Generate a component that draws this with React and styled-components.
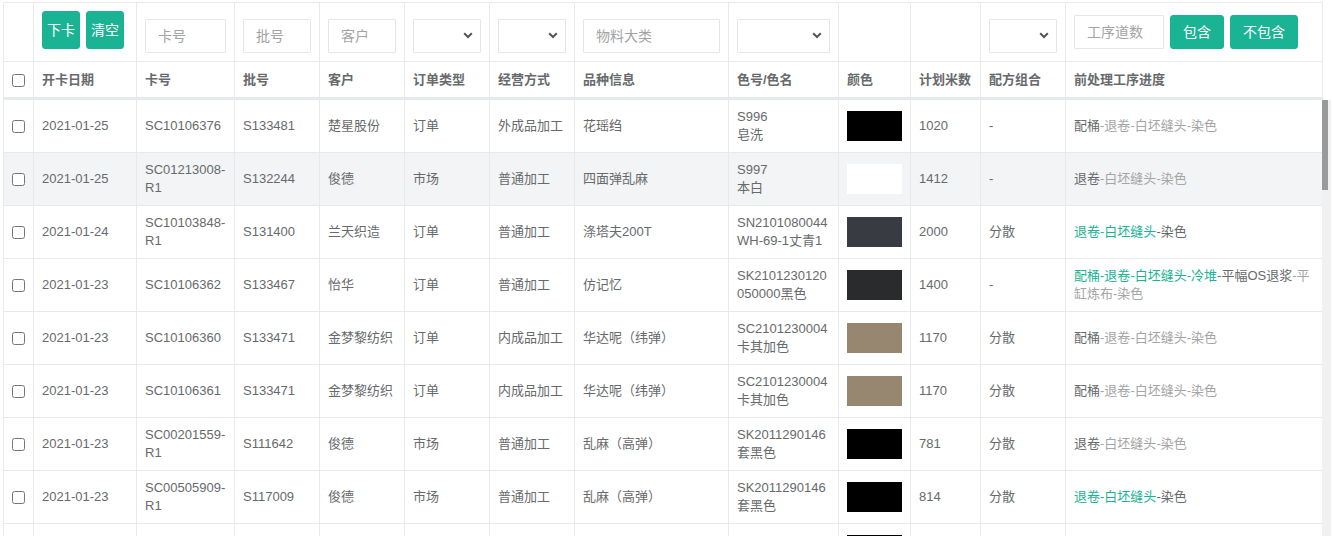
import React from "react";
import styled, { createGlobalStyle } from "styled-components";

const GlobalStyle = createGlobalStyle`
  html, body {
    margin: 0;
    padding: 0;
    background: #fff;
  }
  body {
    font-family: "Liberation Sans", Arial, "Noto Sans CJK SC", sans-serif;
    font-size: 13px;
    color: #676a6c;
  }
`;

const cols = [30, 103, 98, 85, 85, 85, 85, 154, 110, 72, 70, 85, 257];

const Page = styled.div`
  padding: 2px 0 0 3px;
  width: 1328px;
`;

const HeadTable = styled.table`
  width: 1319px;
  table-layout: fixed;
  border-collapse: collapse;
  border-spacing: 0;
`;

const BodyArea = styled.div`
  display: flex;
  height: calc(100vh - 99px);
`;

const BodyScroll = styled.div`
  width: 1319px;
  overflow: hidden;
`;

const Rail = styled.div`
  width: 9px;
  background: #f1f1f1;
`;

const Thumb = styled.div`
  width: 6px;
  height: 90px;
  background: #9a9a9a;
`;

const BodyTable = styled.table`
  width: 1319px;
  table-layout: fixed;
  border-collapse: collapse;
  border-spacing: 0;
  tr:first-child td {
    border-top: none;
  }
`;

const Col = styled.col`
  width: ${(p) => p.$w}px;
`;

const FilterCell = styled.th`
  border: 1px solid #e7eaec;
  padding: 8px;
  vertical-align: bottom;
  text-align: left;
  font-weight: normal;
`;

const TitleCell = styled.th`
  border: 1px solid #e7eaec;
  border-bottom: 3px solid #e7eaec;
  padding: 9px 8px 8px;
  height: 18px;
  line-height: 18px;
  text-align: left;
  font-weight: bold;
  color: #676a6c;
  white-space: nowrap;
  overflow: hidden;
`;

const Row = styled.tr`
  background: ${(p) => (p.$hover ? "#f3f4f5" : "#fff")};
`;

const Cell = styled.td`
  border: 1px solid #e7eaec;
  padding: 8px;
  line-height: 18px;
  vertical-align: middle;
  word-break: break-all;
`;

const CheckCell = styled.td`
  border: 1px solid #e7eaec;
  padding: 8px 0;
  vertical-align: middle;
  text-align: center;
`;

const Check = styled.input.attrs({ type: "checkbox" })`
  display: block;
  margin: 0 auto;
  width: 13px;
  height: 13px;
`;

const Tools = styled.div`
  display: flex;
  gap: 6px;
  align-items: flex-end;
  margin-bottom: 4px;
`;

const Button = styled.button`
  background: #1ab394;
  border: 1px solid #1ab394;
  color: #fff;
  border-radius: 3px;
  font-family: inherit;
  font-size: 14px;
  line-height: 20px;
  padding: ${(p) => (p.$tall ? "8px 4px" : "6px 12px")};
  white-space: nowrap;
  cursor: pointer;
`;

const Field = styled.input`
  box-sizing: border-box;
  width: ${(p) => (p.$w ? `${p.$w}px` : "100%")};
  height: 34px;
  padding: 6px 12px;
  border: 1px solid #e5e6e7;
  border-radius: 1px;
  font-family: inherit;
  font-size: 14px;
  color: #676a6c;
  outline: none;
  &::placeholder {
    color: #a3a3a3;
  }
`;

const SelectWrap = styled.div`
  position: relative;
  height: 34px;
`;

const SelectBox = styled.select`
  box-sizing: border-box;
  width: 100%;
  height: 34px;
  border: 1px solid #e5e6e7;
  border-radius: 1px;
  background: #fff;
  appearance: none;
  outline: none;
`;

const Chevron = styled.svg`
  position: absolute;
  right: 8px;
  top: 13px;
  pointer-events: none;
`;

const Swatch = styled.div`
  width: 55px;
  height: 30px;
  background: ${(p) => p.$c};
`;

const Step = styled.span`
  color: ${(p) =>
    p.$s === "d" ? "#1ab394" : p.$s === "c" ? "#676a6c" : "#a5a5a5"};
`;

const Select = () => (
  <SelectWrap>
    <SelectBox defaultValue="">
      <option value=""></option>
    </SelectBox>
    <Chevron width="10" height="7" viewBox="0 0 10 7">
      <path d="M1.2 1.2 L5 5 L8.8 1.2" fill="none" stroke="#555" strokeWidth="2" />
    </Chevron>
  </SelectWrap>
);

const titles = [
  "",
  "开卡日期",
  "卡号",
  "批号",
  "客户",
  "订单类型",
  "经营方式",
  "品种信息",
  "色号/色名",
  "颜色",
  "计划米数",
  "配方组合",
  "前处理工序进度",
];

const pA = [["配桶", "c"], ["退卷", "p"], ["白坯缝头", "p"], ["染色", "p"]];
const pB = [["退卷", "c"], ["白坯缝头", "p"], ["染色", "p"]];
const pC = [["退卷", "d"], ["白坯缝头", "d"], ["染色", "c"]];
const pD = [
  ["配桶", "d"],
  ["退卷", "d"],
  ["白坯缝头", "d"],
  ["冷堆", "d"],
  ["平幅OS退浆", "c"],
  ["平缸炼布", "p"],
  ["染色", "p"],
];

const base = [
  ["2021-01-25", "SC10106376", "S133481", "楚星股份", "订单", "外成品加工", "花瑶绉", "S996", "皂洗", "#000", "1020", "-", pA],
  ["2021-01-25", "SC01213008-R1", "S132244", "俊德", "市场", "普通加工", "四面弹乱麻", "S997", "本白", "#fff", "1412", "-", pB],
  ["2021-01-24", "SC10103848-R1", "S131400", "兰天织造", "订单", "普通加工", "涤塔夫200T", "SN2101080044", "WH-69-1丈青1", "#383b42", "2000", "分散", pC],
  ["2021-01-23", "SC10106362", "S133467", "怡华", "订单", "普通加工", "仿记忆", "SK2101230120050000黑色", "", "#2a2b2d", "1400", "-", pD],
  ["2021-01-23", "SC10106360", "S133471", "金梦黎纺织", "订单", "内成品加工", "华达呢（纬弹）", "SC2101230004", "卡其加色", "#978771", "1170", "分散", pA],
  ["2021-01-23", "SC10106361", "S133471", "金梦黎纺织", "订单", "内成品加工", "华达呢（纬弹）", "SC2101230004", "卡其加色", "#978771", "1170", "分散", pA],
  ["2021-01-23", "SC00201559-R1", "S111642", "俊德", "市场", "普通加工", "乱麻（高弹）", "SK2011290146", "套黑色", "#000", "781", "分散", pB],
  ["2021-01-23", "SC00505909-R1", "S117009", "俊德", "市场", "普通加工", "乱麻（高弹）", "SK2011290146", "套黑色", "#000", "814", "分散", pC],
  ["2021-01-22", "SC00501511-R1", "S117011", "俊德", "市场", "普通加工", "乱麻（高弹）", "SK2011290146", "套黑色", "#000", "760", "分散", pC],
];

const App = () => (
  <Page>
    <GlobalStyle />
    <HeadTable>
      <colgroup>
        {cols.map((w, i) => (
          <Col key={i} $w={w} />
        ))}
      </colgroup>
      <thead>
        <tr>
          <FilterCell />
          <FilterCell>
            <Tools>
              <Button $tall>下卡</Button>
              <Button $tall>清空</Button>
            </Tools>
          </FilterCell>
          <FilterCell>
            <Field placeholder="卡号" />
          </FilterCell>
          <FilterCell>
            <Field placeholder="批号" />
          </FilterCell>
          <FilterCell>
            <Field placeholder="客户" />
          </FilterCell>
          <FilterCell>
            <Select />
          </FilterCell>
          <FilterCell>
            <Select />
          </FilterCell>
          <FilterCell>
            <Field placeholder="物料大类" />
          </FilterCell>
          <FilterCell>
            <Select />
          </FilterCell>
          <FilterCell />
          <FilterCell />
          <FilterCell>
            <Select />
          </FilterCell>
          <FilterCell>
            <Tools>
              <Field $w={90} placeholder="工序道数" />
              <Button>包含</Button>
              <Button>不包含</Button>
            </Tools>
          </FilterCell>
        </tr>
        <tr>
          {titles.map((t, i) => (
            <TitleCell key={i}>{i === 0 ? <Check /> : t}</TitleCell>
          ))}
        </tr>
      </thead>
    </HeadTable>
    <BodyArea>
      <BodyScroll>
        <BodyTable>
          <colgroup>
            {cols.map((w, i) => (
              <Col key={i} $w={w} />
            ))}
          </colgroup>
          <tbody>
            {base.map((r, i) => (
              <Row key={i} $hover={i === 1}>
                <CheckCell>
                  <Check />
                </CheckCell>
                <Cell>{r[0]}</Cell>
                <Cell>{r[1]}</Cell>
                <Cell>{r[2]}</Cell>
                <Cell>{r[3]}</Cell>
                <Cell>{r[4]}</Cell>
                <Cell>{r[5]}</Cell>
                <Cell>{r[6]}</Cell>
                <Cell>
                  {r[7]}
                  {r[8] && <br />}
                  {r[8]}
                </Cell>
                <Cell>
                  <Swatch $c={r[9]} />
                </Cell>
                <Cell>{r[10]}</Cell>
                <Cell>{r[11]}</Cell>
                <Cell>
                  {r[12].map(([name, s], j) => (
                    <Step key={j} $s={s}>
                      {j > 0 ? "-" : ""}
                      {name}
                    </Step>
                  ))}
                </Cell>
              </Row>
            ))}
          </tbody>
        </BodyTable>
      </BodyScroll>
      <Rail>
        <Thumb />
      </Rail>
    </BodyArea>
  </Page>
);

export default App;
